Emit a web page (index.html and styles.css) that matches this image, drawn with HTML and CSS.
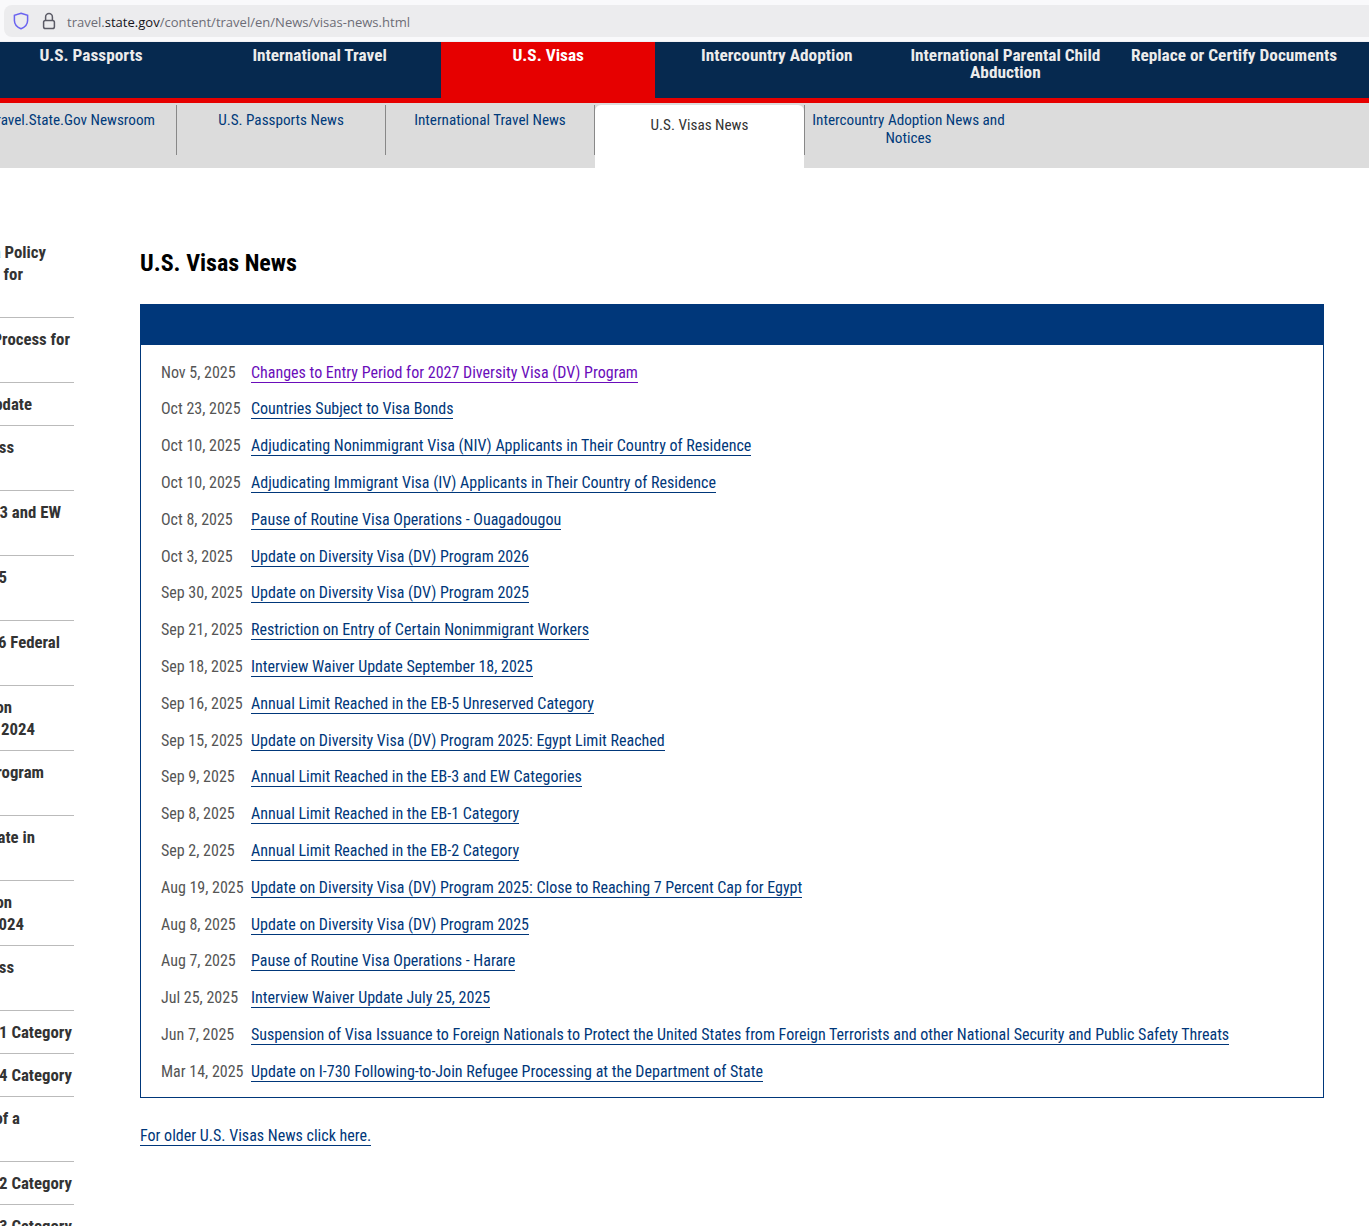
FILE: index.html
```html
<!DOCTYPE html>
<html lang="en">
<head>
<meta charset="utf-8">
<title>U.S. Visas News</title>
<link rel="stylesheet" href="styles.css">
</head>
<body>
<div class="browser-bar">
  <div class="url-bar">
    <svg class="icon-shield" width="16" height="18" viewBox="0 0 16 18"><path d="M8 1.2 14.6 3.4V8.6C14.6 12.6 11.6 15.4 8 16.8 4.4 15.4 1.4 12.6 1.4 8.6V3.4Z" fill="none" stroke="#6a63f0" stroke-width="1.5"/></svg>
    <svg class="icon-lock" width="14" height="18" viewBox="0 0 14 18"><path d="M3.6 8.4V4.9a3.4 3.4 0 0 1 6.8 0V8.4" fill="none" stroke="#5b5b66" stroke-width="1.5"/><rect x="1.6" y="8.4" width="10.8" height="8.2" rx="1.8" fill="none" stroke="#5b5b66" stroke-width="1.5"/></svg>
    <span class="url">travel.<b>state.gov</b>/content/travel/en/News/visas-news.html</span>
  </div>
</div>
<nav class="main-nav">
  <a class="nav-item">U.S. Passports</a>
  <a class="nav-item">International Travel</a>
  <a class="nav-item active">U.S. Visas</a>
  <a class="nav-item">Intercountry Adoption</a>
  <a class="nav-item">International Parental Child Abduction</a>
  <a class="nav-item">Replace or Certify Documents</a>
</nav>
<nav class="sub-nav">
  <a class="sub-item">Travel.State.Gov Newsroom</a>
  <a class="sub-item">U.S. Passports News</a>
  <a class="sub-item">International Travel News</a>
  <a class="sub-item current">U.S. Visas News</a>
  <a class="sub-item">Intercountry Adoption News and Notices</a>
</nav>
<div class="page">
  <aside class="sidebar">
    <div class="side-row tall"><span class="ln e46">Visa Policy</span><span class="ln e23">for</span></div>
    <div class="side-row tall"><span class="ln e70">Process for</span></div>
    <div class="side-row short"><span class="ln e32">Update</span></div>
    <div class="side-row tall"><span class="ln e14">Process</span></div>
    <div class="side-row tall"><span class="ln e61">3 and EW</span></div>
    <div class="side-row tall"><span class="ln e7">2025</span></div>
    <div class="side-row tall"><span class="ln e60">6 Federal</span></div>
    <div class="side-row tall"><span class="ln e12">Action</span><span class="ln e35">2024</span></div>
    <div class="side-row tall"><span class="ln e44">Program</span></div>
    <div class="side-row tall"><span class="ln e35">Update in</span></div>
    <div class="side-row tall"><span class="ln e12">Action</span><span class="ln e24">2024</span></div>
    <div class="side-row tall"><span class="ln e14">Process</span></div>
    <div class="side-row short"><span class="ln e72">1 Category</span></div>
    <div class="side-row short"><span class="ln e72">4 Category</span></div>
    <div class="side-row tall"><span class="ln e20">of a</span></div>
    <div class="side-row short"><span class="ln e72">2 Category</span></div>
    <div class="side-row short"><span class="ln e72">3 Category</span></div>
  </aside>
  <main class="content">
    <h1 class="title">U.S. Visas News</h1>
    <section class="panel">
      <div class="panel-head"></div>
      <ul class="news">
        <li class="news-row"><span class="date">Nov 5, 2025</span><a class="link visited">Changes to Entry Period for 2027 Diversity Visa (DV) Program</a></li>
        <li class="news-row"><span class="date">Oct 23, 2025</span><a class="link">Countries Subject to Visa Bonds</a></li>
        <li class="news-row"><span class="date">Oct 10, 2025</span><a class="link">Adjudicating Nonimmigrant Visa (NIV) Applicants in Their Country of Residence</a></li>
        <li class="news-row"><span class="date">Oct 10, 2025</span><a class="link">Adjudicating Immigrant Visa (IV) Applicants in Their Country of Residence</a></li>
        <li class="news-row"><span class="date">Oct 8, 2025</span><a class="link">Pause of Routine Visa Operations - Ouagadougou</a></li>
        <li class="news-row"><span class="date">Oct 3, 2025</span><a class="link">Update on Diversity Visa (DV) Program 2026</a></li>
        <li class="news-row"><span class="date">Sep 30, 2025</span><a class="link">Update on Diversity Visa (DV) Program 2025</a></li>
        <li class="news-row"><span class="date">Sep 21, 2025</span><a class="link">Restriction on Entry of Certain Nonimmigrant Workers</a></li>
        <li class="news-row"><span class="date">Sep 18, 2025</span><a class="link">Interview Waiver Update September 18, 2025</a></li>
        <li class="news-row"><span class="date">Sep 16, 2025</span><a class="link">Annual Limit Reached in the EB-5 Unreserved Category</a></li>
        <li class="news-row"><span class="date">Sep 15, 2025</span><a class="link">Update on Diversity Visa (DV) Program 2025: Egypt Limit Reached</a></li>
        <li class="news-row"><span class="date">Sep 9, 2025</span><a class="link">Annual Limit Reached in the EB-3 and EW Categories</a></li>
        <li class="news-row"><span class="date">Sep 8, 2025</span><a class="link">Annual Limit Reached in the EB-1 Category</a></li>
        <li class="news-row"><span class="date">Sep 2, 2025</span><a class="link">Annual Limit Reached in the EB-2 Category</a></li>
        <li class="news-row"><span class="date">Aug 19, 2025</span><a class="link">Update on Diversity Visa (DV) Program 2025: Close to Reaching 7 Percent Cap for Egypt</a></li>
        <li class="news-row"><span class="date">Aug 8, 2025</span><a class="link">Update on Diversity Visa (DV) Program 2025</a></li>
        <li class="news-row"><span class="date">Aug 7, 2025</span><a class="link">Pause of Routine Visa Operations - Harare</a></li>
        <li class="news-row"><span class="date">Jul 25, 2025</span><a class="link">Interview Waiver Update July 25, 2025</a></li>
        <li class="news-row"><span class="date">Jun 7, 2025</span><a class="link">Suspension of Visa Issuance to Foreign Nationals to Protect the United States from Foreign Terrorists and other National Security and Public Safety Threats</a></li>
        <li class="news-row"><span class="date">Mar 14, 2025</span><a class="link">Update on I-730 Following-to-Join Refugee Processing at the Department of State</a></li>
      </ul>
    </section>
    <p class="older"><a class="link">For older U.S. Visas News click here.</a></p>
  </main>
</div>
</body>
</html>
```
FILE: styles.css
```css
* { box-sizing: border-box; }
html, body { margin: 0; padding: 0; height: 1226px; overflow: hidden; background: #fff; }
body { font-family: Roboto, "Liberation Sans", sans-serif; font-stretch: 75%; color: #333; }
.browser-bar { height: 42px; background: #f9f9fb; padding: 5px 0 4px 4px; border-bottom: 1px solid #f0f0f4; }
.url-bar { height: 32px; background: #ececee; border-radius: 8px 0 0 8px; display: flex; align-items: center; padding-left: 9px; }
.icon-shield { margin-right: 13px; }
.icon-lock { margin-right: 11px; }
.url { font-family: "Open Sans", sans-serif; font-stretch: normal; font-size: 13.04px; line-height: 18px; padding-top: 2px; color: #6c6c76; }
.url b { font-weight: 400; color: #15141a; }
.main-nav { height: 61px; background: #06294f; border-bottom: 5px solid #e60000; display: flex; gap: 14.6px; width: 1369px; }
.nav-item { flex: 0 0 214px; text-align: center; color: #ececec; font-weight: 700; font-size: 17.3px; line-height: 17px; padding: 5px 0 0; }
.nav-item:first-child { margin-left: -16px; }
.nav-item.active { background: #e60000; color: #fff; }
.sub-nav { height: 65px; background: #dcdcdc; display: flex; padding-top: 2px; }
.sub-item { flex: 0 0 209px; height: 50px; border-right: 1px solid #888; text-align: center; color: #003a7a; font-size: 15.2px; line-height: 18px; padding: 6px 6px 0; }
.sub-item:first-child { margin-left: -32px; white-space: nowrap; }
.sub-item:last-child { border-right: 0; margin-left: 1px; padding-left: 5px; padding-right: 7px; }
.sub-item.current { position: relative; height: 63px; background: #fff; color: #333; border-right: 0; padding: 11px 6px 0; border-radius: 6px 6px 0 0; }
.sub-item.current::after { content: ""; position: absolute; top: 0; right: -1px; width: 1px; height: 50px; background: #888; }
.page { display: flex; }
.sidebar { flex: 0 0 74px; overflow: hidden; padding-top: 73px; height: 1058px; font-weight: 700; font-size: 16.8px; line-height: 22px; color: #333; }
.side-row { border-bottom: 1px solid #bbb; }
.side-row.tall { height: 65px; padding-top: 10px; }
.side-row.short { height: 43px; padding-top: 10px; }
.side-row:first-child { height: 77px; padding-top: 0; }
.ln { display: flex; justify-content: flex-end; white-space: nowrap; }
.e7 { padding-right: 67px; } .e12 { padding-right: 62px; } .e14 { padding-right: 60px; }
.e20 { padding-right: 54px; } .e23 { padding-right: 51px; } .e24 { padding-right: 50px; }
.e32 { padding-right: 42px; } .e35 { padding-right: 39px; } .e44 { padding-right: 30px; }
.e46 { padding-right: 28px; } .e60 { padding-right: 14px; } .e61 { padding-right: 13px; }
.e70 { padding-right: 4px; } .e72 { padding-right: 2px; }
.content { flex: 0 0 1184px; margin-left: 66px; }
.title { margin: 0; padding-top: 81px; font-size: 24px; line-height: 28px; font-weight: 700; color: #000; height: 136px; }
.panel { border: 1px solid #00377a; height: 794px; }
.panel-head { height: 40px; background: #00377a; }
.news { list-style: none; margin: 0; padding: 9.2px 0 0 20px; }
.news-row { display: flex; align-items: center; height: 36.8px; font-size: 16px; }
.date { flex: 0 0 90px; color: #555; line-height: 19px; height: 20px; }
.link { color: #00377a; border-bottom: 1px solid #00377a; line-height: 19px; height: 20px; }
.link.visited { color: #6a0dba; border-color: #6a0dba; }
.older { margin: 28px 0 0; font-size: 16px; line-height: 20px; }
```
